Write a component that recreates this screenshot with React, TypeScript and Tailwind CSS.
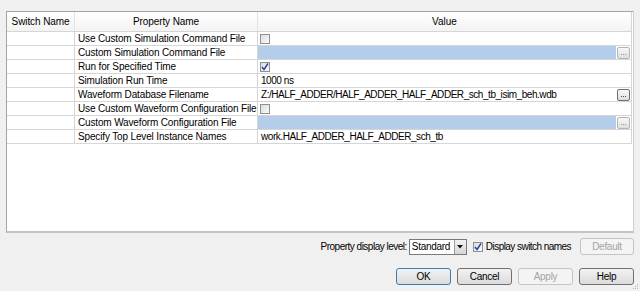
import React from "react";

type Row = {
  name: string;
  kind: "check" | "checked" | "text" | "file" | "blank";
  value?: string;
};

const rows: Row[] = [
  { name: "Use Custom Simulation Command File", kind: "check" },
  { name: "Custom Simulation Command File", kind: "blank" },
  { name: "Run for Specified Time", kind: "checked" },
  { name: "Simulation Run Time", kind: "text", value: "1000 ns" },
  {
    name: "Waveform Database Filename",
    kind: "file",
    value: "Z:/HALF_ADDER/HALF_ADDER_HALF_ADDER_sch_tb_isim_beh.wdb",
  },
  { name: "Use Custom Waveform Configuration File", kind: "check" },
  { name: "Custom Waveform Configuration File", kind: "blank" },
  { name: "Specify Top Level Instance Names", kind: "text", value: "work.HALF_ADDER_HALF_ADDER_sch_tb" },
];

function CheckBox({ checked }: { checked?: boolean }) {
  return (
    <div className="w-[10px] h-[10px] border border-[#8e8f8f] bg-gradient-to-br from-[#dcdcdc] to-[#fbfbfb] flex items-center justify-center shrink-0">
      {checked && (
        <svg width="8" height="8" viewBox="0 0 8 8">
          <path d="M1 4 L3 6.5 L7 0.5" stroke="#2b3f9e" strokeWidth="1.4" fill="none" />
        </svg>
      )}
    </div>
  );
}

function DotsButton({ enabled }: { enabled?: boolean }) {
  return (
    <div
      className={
        "w-[13px] h-[12px] rounded-[2px] border flex items-end justify-center gap-[1px] pb-[3px] bg-gradient-to-b from-[#f8f8f8] to-[#dedede] " +
        (enabled ? "border-[#6f6f6f]" : "border-[#b5b5b5]")
      }
    >
      <span className={"w-[1px] h-[1px] " + (enabled ? "bg-[#2f5a8a]" : "bg-[#9a9a9a]")} />
      <span className={"w-[1px] h-[1px] " + (enabled ? "bg-[#2f5a8a]" : "bg-[#9a9a9a]")} />
      <span className={"w-[1px] h-[1px] " + (enabled ? "bg-[#2f5a8a]" : "bg-[#9a9a9a]")} />
    </div>
  );
}

function ValueCell({ row }: { row: Row }) {
  if (row.kind === "check" || row.kind === "checked") {
    return (
      <div className="h-full flex items-center pl-[2px]">
        <CheckBox checked={row.kind === "checked"} />
      </div>
    );
  }
  if (row.kind === "blank") {
    return (
      <div className="h-full flex items-center">
        <div className="flex-1 h-full bg-[#b3cdea]" />
        <div className="w-[15px] flex items-center justify-center">
          <DotsButton />
        </div>
      </div>
    );
  }
  if (row.kind === "file") {
    return (
      <div className="h-full flex items-center">
        <div className="flex-1 pl-[3px] leading-[13px] truncate tracking-[-0.45px]">{row.value}</div>
        <div className="w-[15px] flex items-center justify-center">
          <DotsButton enabled />
        </div>
      </div>
    );
  }
  return <div className="h-full pl-[3px] leading-[13px] tracking-[-0.45px]">{row.value}</div>;
}

function Button({ label, primary, disabled }: { label: string; primary?: boolean; disabled?: boolean }) {
  return (
    <div
      className={
        "w-[55px] h-[17px] rounded-[3px] border flex items-center justify-center text-[10px] tracking-[-0.3px] " +
        (disabled
          ? "border-[#c2c5c8] bg-[#f4f4f4] text-[#a3a3a3]"
          : primary
          ? "border-[#3d7bad] bg-gradient-to-b from-[#f2f2f2] to-[#dbdbdb] text-black"
          : "border-[#707070] bg-gradient-to-b from-[#f2f2f2] to-[#dbdbdb] text-black")
      }
    >
      {label}
    </div>
  );
}

export default function App() {
  return (
    <div
      className="w-[640px] h-[291px] bg-[#f0f0f0] text-[10px] text-black flex flex-col pt-[11px] px-[6px] relative"
      style={{ fontFamily: '"Liberation Sans", Arial, sans-serif' }}
    >
      {/* property grid */}
      <div className="h-[222px] bg-white border border-[#a5a5a5] border-r-[#cfcfcf] border-b-2 border-b-[#c4c4c4] pr-[1px] flex flex-col">
        <div className="grid grid-cols-[68px_183px_1fr] h-[20px] bg-gradient-to-b from-white to-[#f3f3f3] border-b border-[#d5d5d5] border-r border-r-[#d5d5d5]">
          <div className="flex items-center justify-center border-r border-[#e3e3e3] tracking-[-0.1px]">Switch Name</div>
          <div className="flex items-center justify-center border-r border-[#e3e3e3] tracking-[-0.1px]">Property Name</div>
          <div className="flex items-center justify-center">Value</div>
        </div>
        {rows.map((r) => (
          <div
            key={r.name}
            className="grid grid-cols-[68px_183px_1fr] h-[14px] border-b border-[#d6d6d6] border-r border-r-[#d5d5d5]"
          >
            <div className="border-r border-[#d6d6d6]" />
            <div className="border-r border-[#d6d6d6] pl-[3px] leading-[13px] whitespace-nowrap overflow-hidden tracking-[-0.15px]">
              {r.name}
            </div>
            <ValueCell row={r} />
          </div>
        ))}
      </div>

      {/* display options */}
      <div className="flex items-center justify-end mt-[5px] h-[17px]">
        <span className="mr-[2px] tracking-[-0.5px]">Property display level:</span>
        <div className="w-[58px] h-[16px] border border-[#7a7a7a] bg-white flex items-center">
          <span className="flex-1 pl-[2px] tracking-[-0.3px]">Standard</span>
          <div className="w-[12px] h-[14px] border-l border-[#9a9a9a] bg-gradient-to-b from-[#f2f2f2] to-[#d6d6d6] flex items-center justify-center">
            <svg width="6" height="4" viewBox="0 0 6 4">
              <path d="M0 0 H6 L3 3.5 Z" fill="#111" />
            </svg>
          </div>
        </div>
        <div className="ml-[6px] mr-[3px]">
          <CheckBox checked />
        </div>
        <span className="tracking-[-0.55px]">Display switch names</span>
        <div className="ml-[9px]">
          <div className="w-[54px] h-[17px] rounded-[3px] border border-[#c2c5c8] bg-[#f4f4f4] text-[#a3a3a3] flex items-center justify-center tracking-[-0.3px]">
            Default
          </div>
        </div>
      </div>

      {/* dialog buttons */}
      <div className="flex justify-end gap-[6px] mt-[13px]">
        <Button label="OK" primary />
        <Button label="Cancel" />
        <Button label="Apply" disabled />
        <Button label="Help" />
      </div>

      <svg className="absolute right-[1px] bottom-[1px]" width="6" height="6" viewBox="0 0 6 6">
        <rect x="4" y="0" width="1" height="1" fill="#b8b8b8" />
        <rect x="2" y="2" width="1" height="1" fill="#b8b8b8" />
        <rect x="4" y="2" width="1" height="1" fill="#b8b8b8" />
        <rect x="0" y="4" width="1" height="1" fill="#b8b8b8" />
        <rect x="2" y="4" width="1" height="1" fill="#b8b8b8" />
        <rect x="4" y="4" width="1" height="1" fill="#b8b8b8" />
      </svg>
    </div>
  );
}
